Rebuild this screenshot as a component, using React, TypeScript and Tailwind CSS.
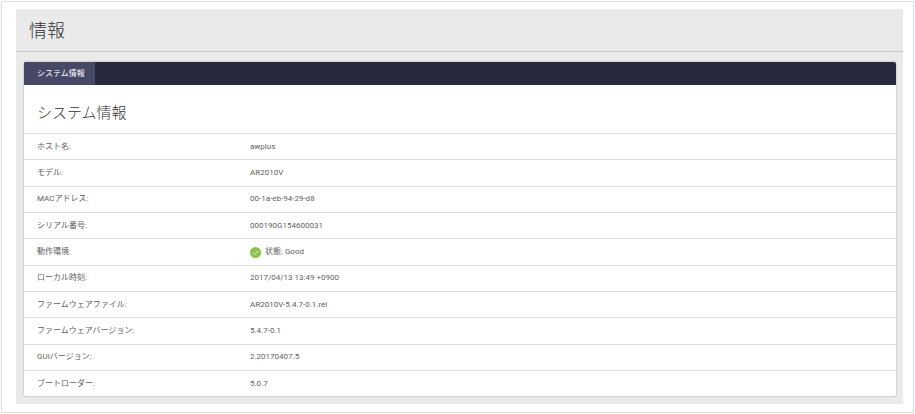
import type { ReactNode } from 'react';

const StatusGood = () => (
  <span className="flex items-center gap-1">
    <svg viewBox="0 0 22 22" className="h-[11px] w-[11px]" aria-hidden="true">
      <circle cx="11" cy="11" r="11" fill="#8bc34a" />
      <path d="M5.5 11.5l3.8 3.7 7.2-7.4" fill="none" stroke="#fff" strokeWidth="2" />
    </svg>
    状態: Good
  </span>
);

const rows: { label: string; value: ReactNode }[] = [
  { label: 'ホスト名:', value: 'awplus' },
  { label: 'モデル:', value: 'AR2010V' },
  { label: 'MACアドレス:', value: '00-1a-eb-94-29-d8' },
  { label: 'シリアル番号:', value: '000190G154600031' },
  { label: '動作環境:', value: <StatusGood /> },
  { label: 'ローカル時刻:', value: '2017/04/13 13:49 +0900' },
  { label: 'ファームウェアファイル:', value: 'AR2010V-5.4.7-0.1.rel' },
  { label: 'ファームウェアバージョン:', value: '5.4.7-0.1' },
  { label: 'GUIバージョン:', value: '2.20170407.5' },
  { label: 'ブートローダー:', value: '5.0.7' },
];

const App = () => {
  return (
    <div className="m-px border border-[#dedede] bg-white pt-[7px] pr-[10px] pb-2 pl-[14px] font-['Roboto','Noto_Sans_CJK_JP',sans-serif] text-[#616161]">
      <div className="bg-[#eaeaea]">
        {/* Page title */}
        <header className="flex h-[43px] items-center border-b border-[#c8c8c8] px-[13px] pt-[2px]">
          <h1 className="text-[18px] leading-6 font-light text-[#333]">情報</h1>
        </header>

        <main className="pt-[10px] pr-[7px] pb-2 pl-2">
          <section className="overflow-hidden rounded-[2px] bg-white shadow-[0_0_2px_rgba(0,0,0,0.35)]">
            {/* Tabs */}
            <div role="tablist" className="flex bg-[#272a3d]">
              <button
                type="button"
                role="tab"
                aria-selected="true"
                className="h-[23px] bg-[#464866] pr-[10px] pl-[13px] text-[8px] leading-3 text-white"
              >
                システム情報
              </button>
            </div>

            <h2 className="px-[13px] pt-4 pb-2 text-[15px] leading-6 font-light text-[#333]">システム情報</h2>

            <table className="h-[263px] w-full table-fixed border-collapse text-left text-[8px] leading-3">
              <tbody>
                {rows.map((row) => (
                  <tr key={row.label} className="border-t border-[#dcdcdc]">
                    <th scope="row" className="w-[213px] pl-[13px] font-normal">
                      {row.label}
                    </th>
                    <td className="pl-[13px]">{row.value}</td>
                  </tr>
                ))}
              </tbody>
            </table>
          </section>
        </main>
      </div>
    </div>
  );
};

export default App;
